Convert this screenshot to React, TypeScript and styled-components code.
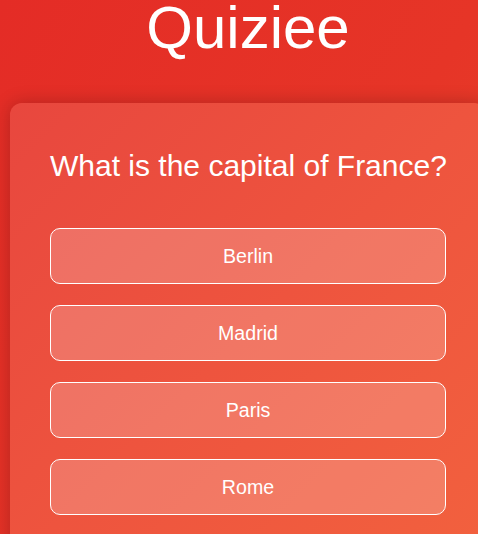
import React from "react";
import styled, { createGlobalStyle } from "styled-components";

const Global = createGlobalStyle`
  html, body {
    margin: 0;
    padding: 0;
    overflow: hidden;
  }
  body {
    background: linear-gradient(120deg, #e42c26 0%, #e63527 60%, #e8432b 100%);
    min-height: 534px;
    font-family: "Liberation Sans", Arial, sans-serif;
    color: #fff;
  }
`;

const Page = styled.div`
  width: 476px;
  margin-left: 10px;
  display: flex;
  flex-direction: column;
`;

const Title = styled.h1`
  margin: -7px 0 41px;
  font-size: 60px;
  font-weight: 400;
  line-height: 69px;
  text-align: center;
  color: #fff;
`;

const Card = styled.div`
  box-sizing: border-box;
  width: 476px;
  min-height: 460px;
  padding: 45px 40px 40px;
  border-radius: 12px;
  background: linear-gradient(135deg, #e8473e 0%, #ee543e 50%, #f2613e 100%);
  box-shadow: 0 0 18px rgba(0, 0, 0, 0.22);
  display: flex;
  flex-direction: column;
`;

const Question = styled.h2`
  margin: 0 0 45px;
  font-size: 30px;
  font-weight: 400;
  line-height: 35px;
  text-align: center;
  white-space: nowrap;
  color: #fff;
`;

const Options = styled.div`
  display: flex;
  flex-direction: column;
  gap: 21px;
`;

const Option = styled.button`
  box-sizing: border-box;
  width: 396px;
  height: 56px;
  padding: 16px;
  border: 1px solid #fff;
  border-radius: 10px;
  background: rgba(255, 255, 255, 0.2);
  color: #fff;
  font-family: "Liberation Sans", Arial, sans-serif;
  font-size: 19.6px;
  line-height: 22px;
  text-align: center;
  cursor: pointer;
`;

const options = ["Berlin", "Madrid", "Paris", "Rome"];

export default function App() {
  return (
    <>
      <Global />
      <Page>
        <Title>Quiziee</Title>
        <Card>
          <Question>What is the capital of France?</Question>
          <Options>
            {options.map((o) => (
              <Option key={o}>{o}</Option>
            ))}
          </Options>
        </Card>
      </Page>
    </>
  );
}
